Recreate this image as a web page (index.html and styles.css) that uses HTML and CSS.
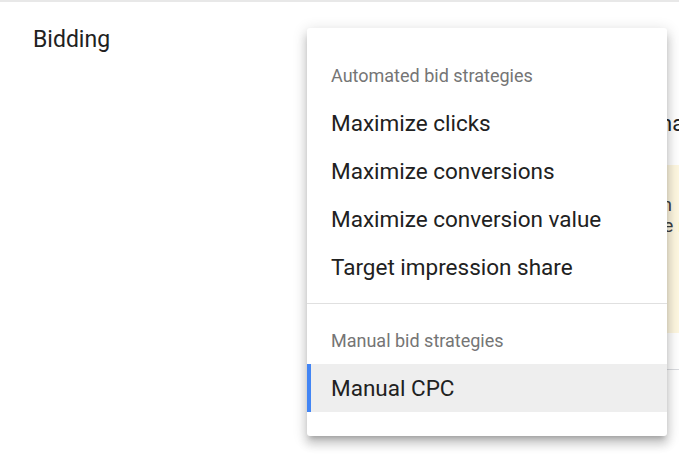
FILE: index.html
```html
<!DOCTYPE html>
<html lang="en">
<head>
<meta charset="utf-8">
<title>Bidding</title>
<link rel="stylesheet" href="styles.css">
</head>
<body>
<div class="topbar"></div>
<section class="section">
  <h2 class="title">Bidding</h2>
  <div class="body">
    <p class="lead">Bids are set automatically to manage your budget</p>
    <div class="notice">
      <span class="notice-line">This can't be used with this campaign</span>
      <span class="notice-line">Choose another strategy or adjust the required settings</span>
    </div>
    <div class="divider"></div>
  </div>
</section>

<div class="menu" role="listbox">
  <div class="group">
    <div class="group-label">Automated bid strategies</div>
    <div class="item">Maximize clicks</div>
    <div class="item">Maximize conversions</div>
    <div class="item">Maximize conversion value</div>
    <div class="item">Target impression share</div>
  </div>
  <div class="group group-sep">
    <div class="group-label">Manual bid strategies</div>
    <div class="item item-selected">Manual CPC</div>
  </div>
</div>
</body>
</html>
```
FILE: styles.css
```css
html, body {
  margin: 0;
  padding: 0;
}

body {
  width: 679px;
  height: 460px;
  overflow: hidden;
  background: #ffffff;
  font-family: Roboto, "Noto Sans", Arial, sans-serif;
  color: #212121;
  position: relative;
}

.topbar {
  height: 2px;
  background: #e8e8e8;
}

.section {
  display: grid;
  grid-template-columns: 346px 1fr;
  padding-top: 24px;
}

.title {
  margin: 0;
  padding-left: 33px;
  font-size: 23px;
  line-height: 28px;
  font-weight: 400;
  color: #212121;
}

.body {
  min-width: 0;
  overflow: hidden;
}

.lead {
  margin: 84px 0 0;
  font-size: 22px;
  line-height: 28px;
  color: #212121;
  white-space: nowrap;
}

.notice {
  margin-top: 27px;
  height: 168px;
  box-sizing: border-box;
  padding: 29px 0 0 10px;
  background: #fef7e0;
  display: flex;
  flex-direction: column;
}

.notice-line {
  font-size: 19px;
  line-height: 21px;
  color: #3c4043;
  white-space: nowrap;
}

.divider {
  margin-top: 36px;
  height: 1px;
  background: #dadce0;
}

.menu {
  position: absolute;
  left: 307px;
  top: 28px;
  width: 360px;
  box-sizing: border-box;
  padding: 11px 0 12px;
  background: #ffffff;
  border-radius: 3px;
  box-shadow: 0 5px 5px -3px rgba(0,0,0,.2), 0 8px 10px 1px rgba(0,0,0,.14), 0 3px 14px 2px rgba(0,0,0,.12);
}

.group {
  padding: 12px 0;
}

.group-sep {
  border-top: 1px solid #e0e0e0;
}

.group-label {
  height: 48px;
  display: flex;
  align-items: center;
  padding-left: 24px;
  font-size: 18px;
  color: #757575;
}

.item {
  height: 48px;
  display: flex;
  align-items: center;
  padding-left: 24px;
  font-size: 22.5px;
  color: #212121;
}

.item-selected {
  background: #eeeeee;
  border-left: 4px solid #4285f4;
  padding-left: 20px;
}
```
